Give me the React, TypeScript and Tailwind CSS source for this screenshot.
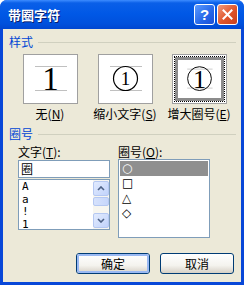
import React from "react";

function Preview({ kind }: { kind: 0 | 1 | 2 }) {
  return (
    <svg width="100%" height="100%" viewBox="0 0 53 48" className="block">
      <line x1="11" y1="11.5" x2="43" y2="11.5" stroke="#c0c0c0" strokeWidth="1" />
      <line x1="11" y1="35.5" x2="43" y2="35.5" stroke="#c0c0c0" strokeWidth="1" />
      {kind === 1 && <circle cx="26.5" cy="23.5" r="12" fill="none" stroke="#000" strokeWidth="1.2" />}
      {kind === 2 && <circle cx="26.5" cy="23.5" r="15" fill="none" stroke="#000" strokeWidth="1.2" />}
      <text
        x="26.5"
        y={kind === 1 ? 30 : 35}
        textAnchor="middle"
        fontFamily="'Liberation Serif', serif"
        fontSize={kind === 1 ? 19 : 33}
        fill="#000"
      >
        1
      </text>
    </svg>
  );
}

function Mn({ children }: { children: React.ReactNode }) {
  return <span className="underline underline-offset-1">{children}</span>;
}

function XPButton({ children, def }: { children: React.ReactNode; def?: boolean }) {
  return (
    <div className="w-[74px] h-[21px] rounded-[3px] border border-[#003c74] bg-[linear-gradient(#ffffff,#f4f3ee_60%,#d6d0c5)] flex items-center justify-center">
      <div
        className={
          "w-full h-full rounded-[2px] flex items-center justify-center text-[12px] leading-[14px] text-black " +
          (def ? "border-[2px] border-[#9ab9f3]" : "border border-transparent")
        }
      >
        {children}
      </div>
    </div>
  );
}

export default function App() {
  return (
    <div className="w-[244px] h-[285px] flex flex-col bg-[#0847d8] rounded-t-[7px] overflow-hidden font-['Noto_Sans_CJK_SC','Liberation_Sans',sans-serif]">
      {/* Title bar */}
      <div className="h-[29px] shrink-0 flex items-center pl-[8px] pr-[6px] bg-[linear-gradient(#3d8cff_0px,#0a5fe8_3px,#0058e6_14px,#0050dc_24px,#0046d0_29px)]">
        <div className="flex-1 text-white font-bold text-[13px] leading-[16px] [text-shadow:1px_1px_#0a1e6e]">带圈字符</div>
        <div className="flex gap-[2px]">
          <div className="w-[21px] h-[21px] rounded-[3px] border border-white bg-[linear-gradient(135deg,#5c9bff,#2566e8_60%,#1c4fd6)] flex items-center justify-center text-white font-bold text-[15px] leading-none font-['Liberation_Sans',sans-serif]">
            ?
          </div>
          <div className="w-[21px] h-[21px] rounded-[3px] border border-white bg-[linear-gradient(135deg,#f09a7c,#e0542a_55%,#c8401c)] flex items-center justify-center">
            <svg width="11" height="11" viewBox="0 0 11 11">
              <path d="M1.5 1.5 L9.5 9.5 M9.5 1.5 L1.5 9.5" stroke="#fff" strokeWidth="2" strokeLinecap="square" />
            </svg>
          </div>
        </div>
      </div>

      {/* Body */}
      <div className="flex-1 mx-[3px] mb-[3px] bg-[#ece9d8] flex flex-col text-[12px] leading-[14px] text-black">
        {/* 样式 header */}
        <div className="mt-[6px] flex items-center pl-[6px] pr-[5px]">
          <span className="text-[#0046d5]">样式</span>
          <div className="ml-[5px] flex-1 h-px bg-[#d0d0bf]" />
        </div>

        {/* previews */}
        <div className="mt-[5px] pl-[9px] flex">
          <div className="w-[76px] flex flex-col items-center">
            <div className="w-[55px] h-[50px] border border-[#a0a0a0] bg-white">
              <Preview kind={0} />
            </div>
            <div className="mt-[3px]">
              无(<Mn>N</Mn>)
            </div>
          </div>
          <div className="w-[74px] flex flex-col items-center">
            <div className="w-[55px] h-[50px] border border-[#a0a0a0] bg-white">
              <Preview kind={1} />
            </div>
            <div className="mt-[3px]">
              缩小文字(<Mn>S</Mn>)
            </div>
          </div>
          <div className="w-[74px] flex flex-col items-center">
            <div className="w-[55px] h-[50px] border border-[#a0a0a0] bg-white p-[1px]">
              <div className="w-full h-full border border-dotted border-black">
                <div className="w-full h-full border-[3px] border-[#8c8c8c] bg-white">
                  <Preview kind={2} />
                </div>
              </div>
            </div>
            <div className="mt-[3px]">
              增大圈号(<Mn>E</Mn>)
            </div>
          </div>
        </div>

        {/* 圈号 header */}
        <div className="mt-[6px] flex items-center pl-[6px] pr-[5px]">
          <span className="text-[#0046d5]">圈号</span>
          <div className="ml-[5px] flex-1 h-px bg-[#d0d0bf]" />
        </div>

        <div className="mt-[4px] pl-[15px] flex gap-[8px]">
          {/* 文字 */}
          <div className="w-[92px] flex flex-col">
            <div>
              文字(<Mn>T</Mn>):
            </div>
            <div className="mt-[1px] h-[18px] border border-[#7f9db9] bg-white pl-[2px] flex items-center">圈</div>
            <div className="mt-[1px] h-[51px] border border-[#7f9db9] bg-white flex">
              <div className="flex-1 pl-[3px] pt-[1px] font-['DejaVu_Sans_Mono',monospace] text-[11px] leading-[12.5px]">
                <div>A</div>
                <div>a</div>
                <div>!</div>
                <div>1</div>
              </div>
              <div className="w-[16px] flex flex-col bg-[#f7f6f0] pt-[1px]">
                <div className="h-[15px] rounded-[2px] border border-[#b5c8f2] bg-[linear-gradient(135deg,#e2ebfe,#c1d3fb)] flex items-center justify-center">
                  <svg width="8" height="5" viewBox="0 0 8 5">
                    <path d="M1 4 L4 1 L7 4" stroke="#4d6185" strokeWidth="1.6" fill="none" />
                  </svg>
                </div>
                <div className="mt-[1px] h-[9px] rounded-[2px] border border-[#b5c8f2] bg-[linear-gradient(90deg,#d6e2fc,#c6d6fb)]" />
                <div className="flex-1" />
                <div className="h-[15px] rounded-[2px] border border-[#b5c8f2] bg-[linear-gradient(135deg,#e2ebfe,#c1d3fb)] flex items-center justify-center mb-[1px]">
                  <svg width="8" height="5" viewBox="0 0 8 5">
                    <path d="M1 1 L4 4 L7 1" stroke="#4d6185" strokeWidth="1.6" fill="none" />
                  </svg>
                </div>
              </div>
            </div>
          </div>

          {/* 圈号 list */}
          <div className="w-[92px] flex flex-col">
            <div>
              圈号(<Mn>O</Mn>):
            </div>
            <div className="h-[79px] border border-[#7f9db9] bg-white pt-[1px] px-[1px] font-['DejaVu_Sans',sans-serif] text-[12px] leading-[15px]">
              <div className="h-[15px] bg-[#8f8f8f] text-white pl-[2px]">○</div>
              <div className="h-[15px] pl-[2px]">□</div>
              <div className="h-[15px] pl-[2px]">△</div>
              <div className="h-[15px] pl-[2px]">◇</div>
            </div>
          </div>
        </div>

        {/* buttons */}
        <div className="mt-auto mb-[8px] flex justify-end gap-[10px] pr-[7px]">
          <XPButton def>确定</XPButton>
          <XPButton>取消</XPButton>
        </div>
      </div>
    </div>
  );
}
